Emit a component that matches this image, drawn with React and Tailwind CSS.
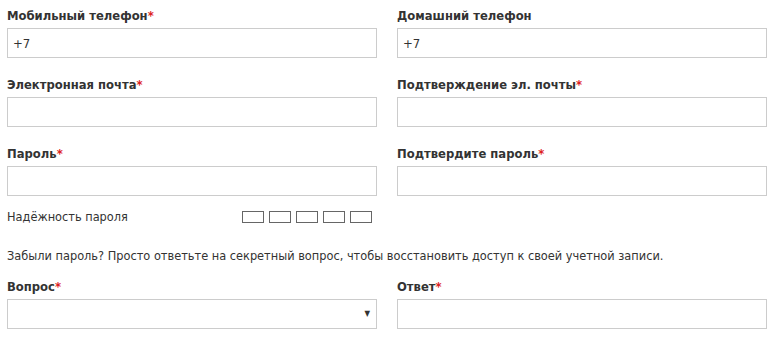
import React from 'react';

const font = { fontFamily: '"DejaVu Sans Condensed", "DejaVu Sans", Verdana, sans-serif' };
const labelFont = { fontFamily: '"DejaVu Sans", Verdana, sans-serif' };

const Label = ({ children, required }) => (
  <label className="block h-4 mb-1 text-[11.6px] leading-4 font-bold text-[#333]" style={labelFont}>
    {children}
    {required && <span className="text-[#d22]">*</span>}
  </label>
);

const Field = ({ label, required, value = '' }) => (
  <div>
    <Label required={required}>{label}</Label>
    <input
      type="text"
      defaultValue={value}
      className="block w-full h-[30px] border border-[#ccc] bg-white px-[5px] text-[13px] text-[#333] outline-none"
      style={font}
    />
  </div>
);

export default function App() {
  return (
    <div className="w-[771px] h-[340px] bg-white pl-[7px] pr-[4px] pt-2 text-[#333]" style={font}>
      <div className="grid grid-cols-[370px_370px] gap-x-[20px] gap-y-[19px]">
        <Field label="Мобильный телефон" required value="+7" />
        <Field label="Домашний телефон" value="+7" />
        <Field label="Электронная почта" required />
        <Field label="Подтверждение эл. почты" required />
        <Field label="Пароль" required />
        <Field label="Подтвердите пароль" required />
      </div>

      <div className="mt-[13px] h-4 flex items-center text-[12.65px]">
        <span className="w-[235px]">Надёжность пароля</span>
        <div className="flex gap-[5px]">
          {[0, 1, 2, 3, 4].map((i) => (
            <div key={i} className="w-[22px] h-[12px] border border-[#666]" />
          ))}
        </div>
      </div>

      <p className="mt-[23px] text-[12.65px] leading-4">
        Забыли пароль? Просто ответьте на секретный вопрос, чтобы восстановить доступ к своей учетной записи.
      </p>

      <div className="mt-[15px] grid grid-cols-[370px_370px] gap-x-[20px]">
        <div>
          <Label required>Вопрос</Label>
          <div className="relative h-[30px] border border-[#ccc] bg-white">
            <span className="absolute right-[6px] top-[10px] text-[8px] leading-none text-[#333]">▼</span>
          </div>
        </div>
        <Field label="Ответ" required />
      </div>
    </div>
  );
}
